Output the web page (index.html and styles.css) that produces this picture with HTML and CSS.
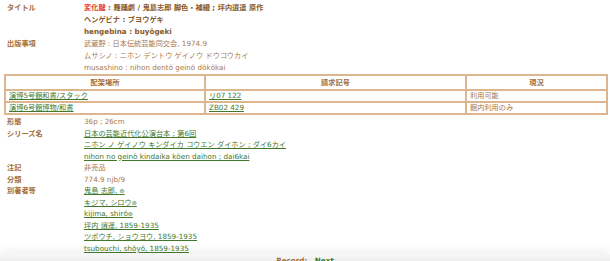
FILE: index.html
```html
<!DOCTYPE html>
<html lang="ja">
<head>
  <meta charset="UTF-8">
  <title>書誌詳細</title>
  <link rel="stylesheet" href="styles.css">
</head>
<body>

<div class="record record-top">
  <div class="field">
    <div class="label">タイトル</div>
    <div class="value title">
      <p><span class="mark">変化腱</span> : 舞踊劇 / 鬼島志郎 脚色・補綴 ; 坪内逍遥 原作</p>
      <p>ヘンゲビナ : ブヨウゲキ</p>
      <p>hengebina : buyōgeki</p>
    </div>
  </div>
  <div class="field">
    <div class="label">出版事項</div>
    <div class="value">
      <p>武蔵野 : 日本伝統芸能同交会, 1974.9</p>
      <p>ムサシノ : ニホン デントウ ゲイノウ ドウコウカイ</p>
      <p>musashino : nihon dentō geinō dōkōkai</p>
    </div>
  </div>
</div>

<table class="holdings">
  <tr>
    <th class="col-place">配架場所</th>
    <th class="col-number">請求記号</th>
    <th class="col-status">現況</th>
  </tr>
  <tr>
    <td><a href="#">演博5号館和書/スタック</a></td>
    <td><a href="#">リ07 122</a></td>
    <td>利用可能</td>
  </tr>
  <tr>
    <td><a href="#">演博6号館博物/和書</a></td>
    <td><a href="#">ZB02 429</a></td>
    <td>館内利用のみ</td>
  </tr>
</table>

<div class="record record-bottom">
  <div class="field">
    <div class="label">形態</div>
    <div class="value"><p>36p ; 26cm</p></div>
  </div>
  <div class="field">
    <div class="label">シリーズ名</div>
    <div class="value">
      <p><a href="#">日本の芸能近代化公演台本 ; 第6回</a></p>
      <p><a href="#">ニホン ノ ゲイノウ キンダイカ コウエン ダイホン ; ダイ6カイ</a></p>
      <p><a href="#">nihon no geinō kindaika kōen daihon ; dai6kai</a></p>
    </div>
  </div>
  <div class="field">
    <div class="label">注記</div>
    <div class="value"><p>非売品</p></div>
  </div>
  <div class="field">
    <div class="label">分類</div>
    <div class="value"><p>774.9 njb/9</p></div>
  </div>
  <div class="field">
    <div class="label">別著者等</div>
    <div class="value">
      <p><a href="#">鬼島 志郎, <span class="star">⊛</span></a></p>
      <p><a href="#">キジマ, シロウ<span class="star">⊛</span></a></p>
      <p><a href="#">kijima, shirō<span class="star">⊛</span></a></p>
      <p><a href="#">坪内 逍遥, 1859-1935</a></p>
      <p><a href="#">ツボウチ, ショウヨウ, 1859-1935</a></p>
      <p><a href="#">tsubouchi, shōyō, 1859-1935</a></p>
    </div>
  </div>
</div>

<div class="pager">
  <span class="pager-label">Record:</span>
  <a href="#" class="pager-next">Next</a>
</div>

</body>
</html>
```

FILE: styles.css
```css
* {
  margin: 0;
  padding: 0;
  box-sizing: border-box;
}

html,
body {
  height: 261px;
  overflow: hidden;
}

body {
  background-color: #ffffff;
  font-family: "DejaVu Sans", "Noto Sans CJK JP", sans-serif;
  font-size: 7.2px;
  color: #a8794c;
}

a {
  color: #41782c;
  text-decoration: underline;
}

.record {
  padding-left: 7px;
}

.record-top {
  padding-top: 2px;
  line-height: 12px;
}

.record-bottom {
  padding-top: 1px;
  line-height: 11.5px;
}

.field {
  display: grid;
  grid-template-columns: 77px 1fr;
}

.label {
  font-weight: bold;
  color: #a36c36;
}

.title {
  font-weight: bold;
  color: #875829;
}

.mark {
  color: #e2402f;
}

.star {
  font-size: 6px;
}

.holdings {
  width: 604px;
  margin: 0 2px 0 4px;
  border-collapse: collapse;
  border: 2px solid #dcb68e;
}

.holdings th,
.holdings td {
  border: 2px solid #dcb68e;
  padding: 0 3px;
  text-align: left;
  line-height: 10px;
}

.holdings th {
  line-height: 13px;
  text-align: center;
  color: #a36c36;
}

.col-place {
  width: 200px;
}

.col-number {
  width: 261px;
}

.pager {
  margin-top: 0;
  height: 12px;
  line-height: 12px;
  padding-top: 1px;
  text-align: center;
  font-weight: bold;
  background: linear-gradient(#f6f6f6, #e9e9e9);
  box-shadow: 0 -5px 8px rgba(0, 0, 0, 0.05);
}

.pager-label {
  color: #a36c36;
}

.pager-next {
  margin-left: 5px;
  text-decoration: none;
}
```
